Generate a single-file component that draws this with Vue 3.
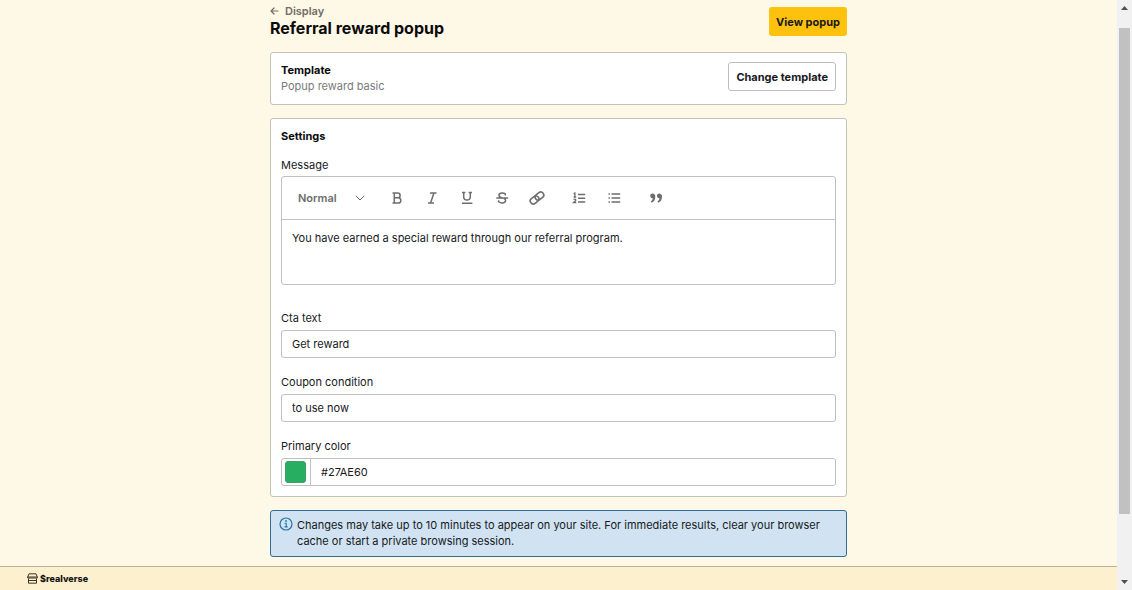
<script setup>
import { ref } from 'vue'

const ctaText = ref('Get reward')
const couponCondition = ref('to use now')
const primaryColor = ref('#27AE60')
</script>

<template>
  <div class="app">
    <div class="view">
      <main class="page">
        <header class="head">
          <div>
            <a class="back" href="#">
              <svg width="9" height="10" viewBox="0 0 9 10" fill="none" stroke="currentColor" stroke-width="1.2" stroke-linecap="round" stroke-linejoin="round" aria-hidden="true">
                <path d="M8 5H1M4 2L1 5l3 3" />
              </svg>
              Display
            </a>
            <h1>Referral reward popup</h1>
          </div>
          <button type="button" class="btn primary">View popup</button>
        </header>

        <section class="card template">
          <div>
            <h2>Template</h2>
            <p>Popup reward basic</p>
          </div>
          <button type="button" class="btn outline">Change template</button>
        </section>

        <section class="card settings">
          <h2>Settings</h2>
          <div class="field message">
            <span id="message-label" class="label">Message</span>
            <div class="editor">
              <div class="toolbar" role="toolbar" aria-label="Formatting">
                <button type="button" class="style-picker">
                  Normal
                  <svg width="10" height="6" viewBox="0 0 10 6" fill="none" stroke="currentColor" stroke-width="1" stroke-linecap="round" aria-hidden="true"><path d="M1 1l4 4 4-4" /></svg>
                </button>
                <div class="tools">
                  <button type="button" aria-label="Bold">
                    <svg viewBox="0 0 16 16"><path d="M3.500 3h5.200a2.400 2.400 0 0 1 0 4.800H5.500M5.500 7.800h3.700a2.600 2.600 0 0 1 0 5.200H3.500M5.300 3v10" stroke-width="1.500" /></svg>
                  </button>
                  <button type="button" aria-label="Italic">
                    <svg viewBox="0 0 16 16"><path d="M6 3h6.500M4 13h6M9.900 3L6.600 13" stroke-width="1.500" /></svg>
                  </button>
                  <button type="button" aria-label="Underline">
                    <svg viewBox="0 0 16 16"><path d="M3 2.500h3.400M9.600 2.500H13M4.700 2.500v4.300a3.300 3.300 0 0 0 6.600 0V2.500M3 13.200h10.400" stroke-width="1.500" /></svg>
                  </button>
                  <button type="button" aria-label="Strikethrough">
                    <svg viewBox="0 0 16 16"><path d="M11.300 5.400V3.900C10.500 3.200 9.400 2.900 8.100 2.900c-2 0-3.200.9-3.200 2.300 0 1.500 1.600 2.200 3.400 2.700M2.300 8h11.800M9.700 8.300c1.300.5 1.900 1.100 1.900 2.200 0 1.500-1.400 2.400-3.500 2.400-1.500 0-2.700-.5-3.500-1.200v-1.500" stroke-width="1.500" /></svg>
                  </button>
                  <button type="button" aria-label="Link">
                    <svg viewBox="0 0 16 16"><g transform="rotate(-38 8 8)"><rect x="0.300" y="5" width="9.200" height="6" rx="3" stroke-width="1.600" /><rect x="6.500" y="5" width="9.200" height="6" rx="3" stroke-width="1.600" /></g></svg>
                  </button>
                  <button type="button" class="apart" aria-label="Numbered list">
                    <svg viewBox="0 0 16 16"><path d="M7 4.500h7.200M7 8.200h7.200M7 12h7.200" stroke-width="1.500" /><path d="M2.600 3.600l1.300-.6V7M2.600 7h2.600M2.600 9.600c.6-.8 2.200-.7 2.200.3 0 .8-1 1.300-2.200 2.600h2.700" stroke-width="1.300" /></svg>
                  </button>
                  <button type="button" aria-label="Bulleted list">
                    <svg viewBox="0 0 16 16"><path d="M5.500 4h8.700M5.500 8h8.700M5.500 12h8.700" stroke-width="1.300" /><path d="M2.500 4h1.400M2.500 8h1.400M2.500 12h1.400" stroke-width="1.400" /></svg>
                  </button>
                  <button type="button" class="apart" aria-label="Quote">
                    <svg viewBox="0 0 16 16"><path d="M4.400 3.500a2.400 2.400 0 1 0 .4 4.800c-.1 1.500-.8 2.300-2 3l.8 1.400c2.500-1 3.700-3 3.700-6 0-2-1.200-3.200-2.900-3.200zM11.100 3.500a2.400 2.400 0 1 0 .4 4.800c-.1 1.500-.8 2.300-2 3l.8 1.400c2.500-1 3.700-3 3.700-6 0-2-1.200-3.200-2.900-3.200z" fill="currentColor" stroke="none" /></svg>
                  </button>
                </div>
              </div>
              <div class="content" contenteditable="true" role="textbox" aria-multiline="true" aria-labelledby="message-label">You have earned a special reward through our referral program.</div>
            </div>
          </div>

          <div class="field">
            <label class="label" for="cta">Cta text</label>
            <input id="cta" v-model="ctaText" class="input" type="text">
          </div>
          <div class="field">
            <label class="label" for="coupon">Coupon condition</label>
            <input id="coupon" v-model="couponCondition" class="input" type="text">
          </div>
          <div class="field">
            <label class="label" for="color">Primary color</label>
            <div class="color-row">
              <span class="swatch-box"><button type="button" class="swatch" :style="{ backgroundColor: primaryColor }" aria-label="Pick color"></button></span>
              <input id="color" v-model="primaryColor" class="input" type="text">
            </div>
          </div>
        </section>

        <aside class="notice">
          <svg width="14" height="14" viewBox="0 0 14 14" fill="none" stroke="#2674a8" aria-hidden="true">
            <circle cx="7" cy="7" r="6" stroke-width="1.200" />
            <path d="M5.600 6.300h1.600v3.400M5.500 9.900h3.200" stroke-width="1.100" />
            <circle cx="7" cy="4" r="0.900" fill="#2674a8" stroke="none" />
          </svg>
          <p>Changes may take up to 10 minutes to appear on your site. For immediate results, clear your browser cache or start a private browsing session.</p>
        </aside>
      </main>

      <footer class="bar">
        <svg width="11" height="11" viewBox="0 0 11 11" fill="none" stroke="#3c3624" stroke-width="1" stroke-linejoin="round" aria-hidden="true">
          <path d="M2 .8h7l1.300 3.200v1H.7V4zM1.500 5.500v4.700h8V5.500M.7 4h9.600M1.500 7.500h8" />
        </svg>
        <strong>$realverse</strong>
      </footer>
    </div>

    <div class="scroll" aria-hidden="true">
      <svg width="7" height="4" viewBox="0 0 7 4"><path d="M0 4L3.500 0 7 4z" fill="#505050" /></svg>
      <div class="track"><div class="thumb"></div></div>
      <svg width="7" height="4" viewBox="0 0 7 4"><path d="M0 0l3.500 4L7 0z" fill="#505050" /></svg>
    </div>
  </div>
</template>

<style>
body {
  background: #fef8e6;
}
</style>

<style scoped>
.app,
.app * {
  box-sizing: border-box;
}
.app {
  display: flex;
  min-height: 100vh;
  font-family: Inter, "Open Sans", sans-serif;
  font-size: 11px;
  line-height: 16px;
  color: #17191c;
}
h1,
h2,
p {
  margin: 0;
}
button,
input {
  font: inherit;
  color: inherit;
}
button {
  cursor: pointer;
}
.view {
  flex: 1;
  display: flex;
  flex-direction: column;
  min-width: 0;
}
.page {
  flex: 1;
  width: 100%;
  max-width: 577px;
  margin: 0 auto;
  padding: 3px 0 9px;
}
.head {
  display: flex;
  justify-content: space-between;
  align-items: flex-start;
  margin-bottom: 15px;
}
.back {
  display: flex;
  align-items: center;
  gap: 6px;
  font-weight: 600;
  color: #706d66;
  text-decoration: none;
}
h1 {
  font-size: 16px;
  line-height: 18px;
  font-weight: 700;
  color: #0b0b0c;
}
h2 {
  font-size: 11px;
  line-height: 16px;
  font-weight: 700;
  color: #0b0b0c;
}
.btn {
  height: 29px;
  padding: 0 6px;
  border: 1px solid transparent;
  border-radius: 3px;
  font-weight: 700;
  white-space: nowrap;
}
.primary {
  margin-top: 4px;
  background: #fdc10e;
}
.outline {
  padding: 1px 7px 0;
  border-color: #bdbdbd;
  background: #fff;
}
.card {
  border: 1px solid #c4c2bc;
  border-radius: 3px;
  background: #fff;
}
.template {
  display: flex;
  justify-content: space-between;
  align-items: flex-start;
  padding: 9px 10px 10px;
  margin-bottom: 13px;
}
.template p {
  color: #7a7a7a;
}
.settings {
  padding: 9px 10px 10px;
  margin-bottom: 13px;
}
.field {
  display: flex;
  flex-direction: column;
  gap: 4px;
  margin-top: 16px;
}
.message {
  gap: 3px;
  margin: 13px 0 25px;
}
.message + .field {
  margin-top: 0;
}
.editor {
  border: 1px solid #c0c0c0;
  border-radius: 3px;
}
.toolbar {
  display: flex;
  align-items: center;
  height: 43px;
  padding-left: 16px;
  border-bottom: 1px solid #c0c0c0;
  color: #6d6d6d;
}
.style-picker {
  display: flex;
  align-items: center;
  justify-content: space-between;
  width: 67px;
  padding: 0;
  border: 0;
  background: none;
  font-weight: 600;
}
.tools {
  display: flex;
  gap: 19px;
  margin-left: 24px;
}
.tools button {
  display: flex;
  padding: 0;
  border: 0;
  background: none;
}
.tools svg {
  width: 16px;
  height: 16px;
  fill: none;
  stroke: currentColor;
}
.tools .apart {
  margin-left: 7px;
}
.content {
  min-height: 64px;
  padding: 10px;
}
.input {
  width: 100%;
  height: 28px;
  padding: 0 10px;
  border: 1px solid #c0c0c0;
  border-radius: 3px;
  background: #fff;
}
.color-row {
  display: flex;
  border: 1px solid #c0c0c0;
  border-radius: 3px;
}
.color-row .input {
  height: 26px;
  border: 0;
}
.swatch-box {
  display: flex;
  padding: 2px 4px 2px 3px;
  border-right: 1px solid #c0c0c0;
}
.swatch {
  width: 21px;
  height: 22px;
  padding: 0;
  border: 1px solid #3d9e68;
  border-radius: 3px;
}
.notice {
  display: flex;
  gap: 4px;
  padding: 6px 10px 7px 8px;
  border: 1px solid #2f6f93;
  border-radius: 3px;
  background: #d1e3f2;
}
.notice svg {
  flex: none;
}
.bar {
  display: flex;
  align-items: center;
  gap: 2px;
  height: 24px;
  padding-left: 27px;
  border-top: 1px solid #b9b198;
  background: #fdf0cf;
  font-size: 9px;
  color: #17150f;
}
.bar strong {
  font-weight: 800;
}
.scroll {
  display: flex;
  flex-direction: column;
  align-items: center;
  width: 15px;
  padding: 6px 0;
  background: #f1f1f1;
}
.track {
  flex: 1;
  align-self: stretch;
  margin: 18px 2px 0;
}
.thumb {
  height: 88%;
  background: #c1c1c1;
}
</style>
